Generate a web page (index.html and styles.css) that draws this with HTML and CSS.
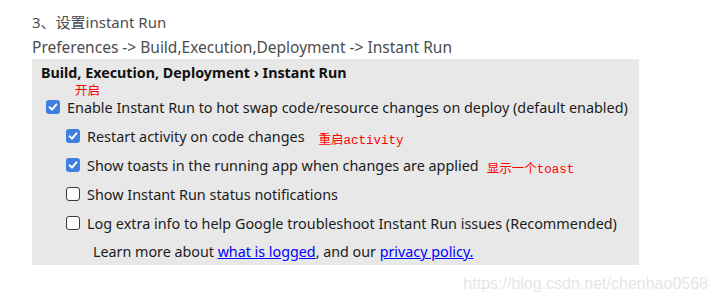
FILE: index.html
```html
<!DOCTYPE html>
<html lang="zh">

<head>
  <meta charset="utf-8" />
  <meta name="viewport" content="width=device-width, initial-scale=1" />
  <title>设置instant Run</title>
  <link rel="stylesheet" href="styles.css">
</head>

<body>
  <p class="step">3、设置instant Run</p>
  <p class="path">Preferences -&gt; Build,Execution,Deployment -&gt; Instant Run</p>
  <div class="panel">
    <div class="title">Build, Execution, Deployment › Instant Run</div>
    <div class="row">
      <span class="note note-top">开启</span>
      <span class="box on"><svg viewBox="0 0 14 14"><path d="M3.6 7.3 L6 9.6 L10.4 4.4" /></svg></span>
      <span class="label">Enable Instant Run to hot swap code/resource changes on deploy (default enabled)</span>
    </div>
    <div class="row sub">
      <span class="box on"><svg viewBox="0 0 14 14"><path d="M3.6 7.3 L6 9.6 L10.4 4.4" /></svg></span>
      <span class="label">Restart activity on code changes</span>
      <span class="note note-far">重启activity</span>
    </div>
    <div class="row sub">
      <span class="box on"><svg viewBox="0 0 14 14"><path d="M3.6 7.3 L6 9.6 L10.4 4.4" /></svg></span>
      <span class="label">Show toasts in the running app when changes are applied</span>
      <span class="note">显示一个toast</span>
    </div>
    <div class="row sub">
      <span class="box off"></span>
      <span class="label">Show Instant Run status notifications</span>
    </div>
    <div class="row sub">
      <span class="box off"></span>
      <span class="label">Log extra info to help Google troubleshoot Instant Run issues (Recommended)</span>
    </div>
    <div class="learn">Learn more about <a href="#">what is logged</a>, and our <a href="#">privacy policy.</a></div>
  </div>
  <div class="watermark">https://blog.csdn.net/chenhao0568</div>
</body>

</html>
```

FILE: styles.css
```css
html,
body {
  margin: 0;
  padding: 0;
  background-color: #fff;
  font-family: "Noto Sans", "Noto Sans CJK SC", sans-serif;
}

body {
  padding: 10px 0 0 32px;
}

.step,
.path {
  margin: 0;
  color: #4d4d4d;
}

.step {
  line-height: 25px;
  font-size: 15px;
}

.path {
  line-height: 24px;
  font-size: 15.5px;
}

.panel {
  width: 607px;
  background-color: #e8e8e8;
  color: #1c1c1c;
}

.title {
  padding: 2px 0 0 9px;
  margin-bottom: 7px;
  line-height: 24px;
  font-size: 14.3px;
  font-weight: 700;
  color: #111;
}

.row {
  position: relative;
  display: flex;
  align-items: center;
  height: 29px;
  padding-left: 14px;
  line-height: 17px;
  font-size: 14.4px;
}

.row.sub {
  padding-left: 34px;
}

.label {
  padding-top: 1px;
}

.box {
  flex: none;
  width: 14px;
  height: 14px;
  margin-right: 7px;
  box-sizing: border-box;
  border-radius: 3px;
}

.box svg {
  display: block;
  width: 14px;
  height: 14px;
}

.box path {
  fill: none;
  stroke: #fff;
  stroke-width: 2;
  stroke-linecap: round;
  stroke-linejoin: round;
}

.box.on {
  background-color: #3f7fe0;
}

.box.off {
  background-color: #fff;
  border: 1.5px solid #3a3a3a;
}

.note {
  margin: 10px 0 0 8px;
  line-height: 14px;
  font-family: "Liberation Mono", "Noto Sans CJK SC", monospace;
  font-size: 12.5px;
  color: #f00;
}

.note-far {
  margin-left: 14px;
}

/* annotation drawn over the top of the first row */
.note-top {
  position: absolute;
  left: 43px;
  top: -5px;
  margin: 0;
  line-height: 11px;
}

.learn {
  height: 28px;
  line-height: 30px;
  padding-left: 61px;
  font-size: 14.3px;
}

.learn a {
  color: #00f;
}

.watermark {
  width: 676px;
  margin-top: 9px;
  line-height: 20px;
  text-align: right;
  font-family: "Liberation Sans", sans-serif;
  font-size: 16px;
  color: #e6e6e6;
}
```
